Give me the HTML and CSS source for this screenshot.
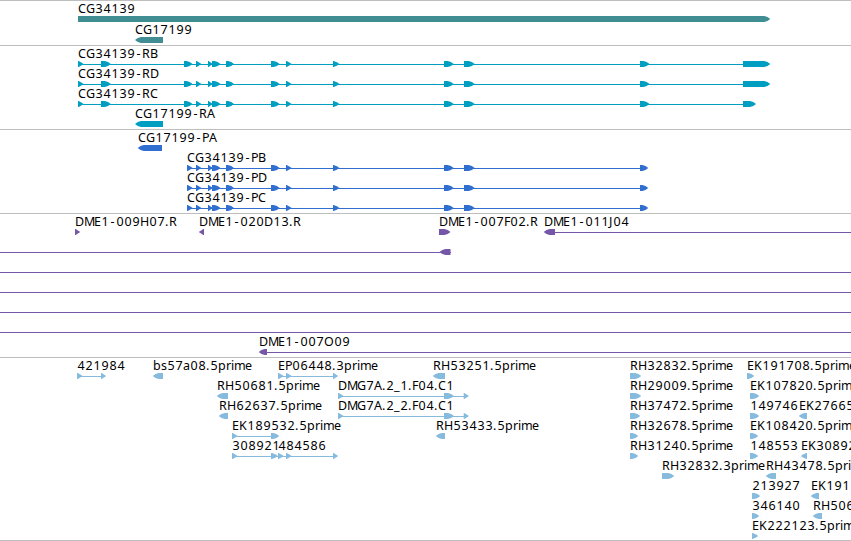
FILE: index.html
```html
<!DOCTYPE html>
<html lang="en">
<head>
  <meta charset="UTF-8"/>
  <title>CG34139 | Genome Tracks</title>
  <link rel="stylesheet" href="styles.css">
</head>
<body>

  <main class="browser">
    <section class="track genes" id="genes"></section>
    <section class="track transcripts" id="transcripts"></section>
    <section class="track proteins" id="proteins"></section>
    <section class="track bacs" id="bacs"></section>
    <section class="track ests" id="ests"></section>
  </main>

  <script src="tracks.js"></script>
</body>
</html>
```
FILE: styles.css
```css
* {
  margin: 0;
  padding: 0;
  box-sizing: border-box;
}

body {
  background: #fff;
  overflow: hidden;
}

.browser {
  width: 851px;
  display: flex;
  flex-direction: column;
  border-bottom: 1px solid #bebebe;
}

.track {
  border-top: 1px solid #bebebe;
  padding-bottom: 3px;
}

.genes,
.ests {
  padding-bottom: 2px;
}

.row {
  display: block;
  width: 100%;
  height: 20px;
  overflow: visible;
}

.genes .row {
  height: 21px;
}

.row text {
  font-family: "Noto Sans", "DejaVu Sans", sans-serif;
  font-size: 12.5px;
  fill: #000;
}

.row line {
  stroke: currentColor;
  stroke-width: 1;
}

.row polygon {
  fill: currentColor;
}

.genes {
  color: #408e93;
}

.transcripts {
  color: #009fc1;
}

.proteins {
  color: #306ecf;
}

.bacs {
  color: #7557a7;
}

.ests {
  color: #87bbdd;
}
```
FILE: tracks.js
```javascript
// feature: [label, label x, blocks, line start, line end]
// block: [start, end], with start > end on the reverse strand
const exons = [[184, 192.5], [196, 201.5], [208, 213], [212, 220.5], [226, 234],
  [271, 279.7], [286, 291.7], [333, 339.5], [444, 453.7], [464, 474.7]];
const coding = [[187, 192.7], ...exons.slice(1), [640, 648.3]];
const mrna = end => [[78, 83.7], [101, 110.8], ...exons, [640, 649.5], [743, end]];
const dmg = [[338, 343.7], [444, 454], [463.7, 469]];

const tracks = {
  genes: [
    [["CG34139", 78, [[78, 770.3]]]],
    [["CG17199", 135, [[163, 135]]]]
  ],
  transcripts: [
    [["CG34139-RB", 78, mrna(770.3), 78, 765]],
    [["CG34139-RD", 78, mrna(770.3), 78, 765]],
    [["CG34139-RC", 78, mrna(756), 78, 750]],
    [["CG17199-RA", 135, [[163, 135]]]]
  ],
  proteins: [
    [["CG17199-PA", 138, [[162, 137.7]]]],
    [["CG34139-PB", 187, coding, 187, 645]],
    [["CG34139-PD", 187, coding, 187, 645]],
    [["CG34139-PC", 187, coding, 187, 645]]
  ],
  bacs: [
    [
      ["DME1-009H07.R", 75, [[75, 80.3]]],
      ["DME1-020D13.R", 199, [[204, 198.7]]],
      ["DME1-007F02.R", 439, [[439, 450.5]]],
      ["DME1-011J04", 544, [[555, 543.7]], 550, 851]
    ],
    [["", 0, [[450.5, 439.5]], 0, 451]],
    [["", 0, [], 0, 851]],
    [["", 0, [], 0, 851]],
    [["", 0, [], 0, 851]],
    [["", 0, [], 0, 851]],
    [["DME1-007O09", 259, [[267, 258.7]], 262, 851]]
  ],
  ests: [
    [
      ["421984", 77, [[77, 82.7], [101, 106.3]], 77, 105],
      ["bs57a08.5prime", 153, [[163, 152.7]]],
      ["EP06448.3prime", 278, [[278, 283.7], [286, 291.7], [333, 338.3]], 278, 337],
      ["RH53251.5prime", 433, [[445, 432.7]]],
      ["RH32832.5prime", 630, [[630, 641.3]]],
      ["EK191708.5prime", 747, [[747, 754.3]]]
    ],
    [
      ["RH50681.5prime", 217, [[228, 216.7]]],
      ["DMG7A.2_1.F04.C1", 338, dmg, 338, 468],
      ["RH29009.5prime", 630, [[630, 641.3]]],
      ["EK107820.5prime", 750, [[750, 759.3]]]
    ],
    [
      ["RH62637.5prime", 219, [[228, 218.7]]],
      ["DMG7A.2_2.F04.C1", 338, dmg, 338, 468],
      ["RH37472.5prime", 630, [[630, 640.3]]],
      ["149746", 750, [[750, 759.3]]],
      ["EK27665", 799, [[807, 798.7]]]
    ],
    [
      ["EK189532.5prime", 232, [[232, 237.7], [271, 279.3]], 232, 278],
      ["RH53433.5prime", 436, [[445, 435.7]]],
      ["RH32678.5prime", 630, [[630, 638.3]]],
      ["EK108420.5prime", 750, [[750, 758.3]]]
    ],
    [
      ["308921", 232, [[232, 237.7], [271, 278]], 232, 278],
      ["484586", 278, [[278, 283.7], [286, 291.7], [333, 338.3]], 278, 337],
      ["RH31240.5prime", 630, [[630, 638.3]]],
      ["148553", 750, [[750, 758.3]]],
      ["EK30892", 801, [[807, 800.7]]]
    ],
    [
      ["RH32832.3prime", 662, [[662, 674.3]]],
      ["RH43478.5prime", 766, [[776, 765.7]]]
    ],
    [
      ["213927", 752, [[752, 760.3]]],
      ["EK191", 811, [[819, 810.7]]]
    ],
    [
      ["346140", 752, [[752, 759.3]]],
      ["RH506", 813, [[822, 812.7]]]
    ],
    [
      ["EK222123.5prime", 752, [[752, 758.3]]]
    ]
  ]
};

// whole-pixel advances keep the digits of stacked labels in line
const advances = {
  A: 8, B: 7, C: 8, D: 9, E: 7, F: 6, G: 9, H: 9, J: 4, K: 8, M: 10, O: 10, P: 7, R: 8,
  a: 7, b: 8, e: 7, i: 3, m: 11, p: 8, r: 5, s: 6, ".": 4, "-": 7, _: 6
};

function drawLabel(label, x) {
  const xs = [];
  for (const char of label) {
    xs.push(/\d/.test(char) ? x + 0.4 : char === "-" ? x + 1.5 : x);
    x += advances[char] || 8;
  }
  return `<text x="${xs.join(" ")}" y="12">${label}</text>`;
}

function drawBlock([start, end]) {
  const length = Math.abs(end - start);
  const dir = end > start ? 1 : -1;
  const neck = end - dir * Math.min(6, length - 0.7);
  const mid = end - dir * 2.8;
  const bulge = length > 7 ? 0.5 : 0.2;
  return `<polygon points="${start},15 ${neck},15 ${mid},${16.5 - bulge} ${end},18 ${mid},${19.5 + bulge} ${neck},21 ${start},21"/>`;
}

function drawFeature([label, x, blocks, from, to]) {
  const line = to ? `<line x1="${from}" y1="18.5" x2="${to}" y2="18.5"/>` : "";
  return line + blocks.map(drawBlock).join("") + (label ? drawLabel(label, x) : "");
}

for (const [id, rows] of Object.entries(tracks)) {
  document.getElementById(id).innerHTML = rows
    .map(row => `<svg class="row">${row.map(drawFeature).join("")}</svg>`)
    .join("");
}
```
